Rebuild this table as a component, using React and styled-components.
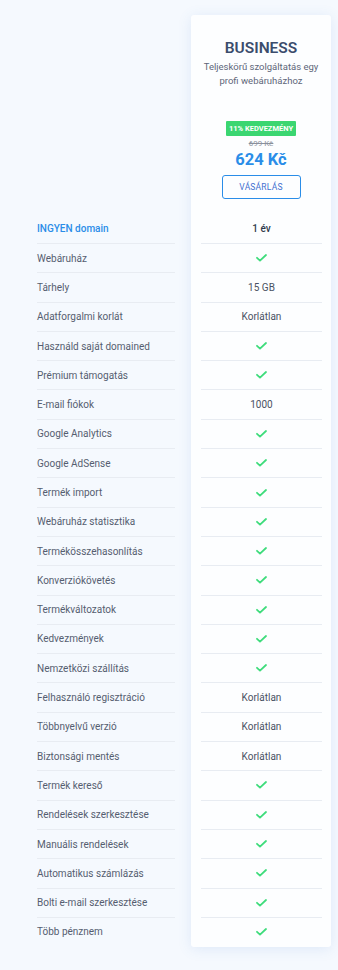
import styled, { createGlobalStyle } from "styled-components";

const GlobalStyle = createGlobalStyle`
  body {
    margin: 0;
    background: #f5f9fe;
    font-family: Roboto, "Liberation Sans", sans-serif;
  }
`;

const Page = styled.div`
  display: flex;
  align-items: flex-end;
  gap: 16px;
  padding: 15px 7px 23px 37px;
`;

const LabelColumn = styled.div`
  width: 138px;
  display: flex;
  flex-direction: column;
`;

const PlanCard = styled.div`
  width: 140px;
  background: #fdfeff;
  border-radius: 3px;
  box-shadow: 0 2px 14px rgba(70, 120, 210, 0.13);
  display: flex;
  flex-direction: column;
`;

const Header = styled.div`
  display: flex;
  flex-direction: column;
  align-items: center;
  text-align: center;
  padding: 24px 6px 15.7px;
`;

const Title = styled.div`
  font-size: 15.5px;
  line-height: 18px;
  font-weight: 600;
  color: #3b4c6c;
`;

const Subtitle = styled.div`
  margin-top: 3px;
  font-size: 9.5px;
  line-height: 14px;
  color: #5d6679;
`;

const Badge = styled.div`
  margin-top: 33px;
  background: #3bd671;
  color: #fff;
  font-size: 7.5px;
  font-weight: 700;
  line-height: 15px;
  padding: 0 3px;
  border-radius: 1px;
`;

const OldPrice = styled.div`
  font-size: 8px;
  line-height: 15px;
  color: #8a909c;
  text-decoration: line-through;
`;

const Price = styled.div`
  font-size: 16.5px;
  line-height: 18px;
  font-weight: 700;
  color: #2a8de8;
`;

const BuyButton = styled.button`
  margin-top: 6px;
  width: 79px;
  height: 24px;
  background: transparent;
  border: 1px solid #2a8de8;
  border-radius: 3px;
  color: #3d6fcf;
  font-family: inherit;
  font-size: 8.5px;
  letter-spacing: 0.2px;
  cursor: pointer;
`;

const Row = styled.div`
  height: 29.3px;
  box-sizing: border-box;
  display: flex;
  align-items: center;
  justify-content: ${(p) => (p.$center ? "center" : "flex-start")};
  border-bottom: 1px solid ${(p) => (p.$last ? "transparent" : "#e8ecf2")};
  font-size: 10px;
  color: ${(p) => (p.$accent ? "#2a8de8" : "#555e70")};
  font-weight: ${(p) => (p.$accent ? 500 : 400)};
`;

const CardRows = styled.div`
  padding: 0 9px 0 10px;
`;

const Value = styled.span`
  color: ${(p) => (p.$strong ? "#2f3a4c" : "#4a5263")};
  font-weight: ${(p) => (p.$strong ? 500 : 400)};
`;

const Check = () => (
  <svg width="11" height="8" viewBox="0 0 11 8" fill="none">
    <path d="M1 3.8 L4 6.6 L10 1" stroke="#3fdc7c" strokeWidth="1.8" strokeLinecap="round" strokeLinejoin="round" />
  </svg>
);

const features = [
  ["INGYEN domain", "1 év"],
  ["Webáruház", true],
  ["Tárhely", "15 GB"],
  ["Adatforgalmi korlát", "Korlátlan"],
  ["Használd saját domained", true],
  ["Prémium támogatás", true],
  ["E-mail fiókok", "1000"],
  ["Google Analytics", true],
  ["Google AdSense", true],
  ["Termék import", true],
  ["Webáruház statisztika", true],
  ["Termékösszehasonlítás", true],
  ["Konverziókövetés", true],
  ["Termékváltozatok", true],
  ["Kedvezmények", true],
  ["Nemzetközi szállítás", true],
  ["Felhasználó regisztráció", "Korlátlan"],
  ["Többnyelvű verzió", "Korlátlan"],
  ["Biztonsági mentés", "Korlátlan"],
  ["Termék kereső", true],
  ["Rendelések szerkesztése", true],
  ["Manuális rendelések", true],
  ["Automatikus számlázás", true],
  ["Bolti e-mail szerkesztése", true],
  ["Több pénznem", true],
];

export default function App() {
  const last = features.length - 1;
  return (
    <>
      <GlobalStyle />
      <Page>
        <LabelColumn>
          {features.map(([label], i) => (
            <Row key={label} $accent={i === 0} $last={i === last}>
              {label}
            </Row>
          ))}
        </LabelColumn>
        <PlanCard>
          <Header>
            <Title>BUSINESS</Title>
            <Subtitle>
              Teljeskörű szolgáltatás egy
              <br />
              profi webáruházhoz
            </Subtitle>
            <Badge>11% KEDVEZMÉNY</Badge>
            <OldPrice>699 Kč</OldPrice>
            <Price>624 Kč</Price>
            <BuyButton>VÁSÁRLÁS</BuyButton>
          </Header>
          <CardRows>
            {features.map(([label, value], i) => (
              <Row key={label} $center $last={i === last}>
                {value === true ? <Check /> : <Value $strong={i === 0}>{value}</Value>}
              </Row>
            ))}
          </CardRows>
        </PlanCard>
      </Page>
    </>
  );
}
